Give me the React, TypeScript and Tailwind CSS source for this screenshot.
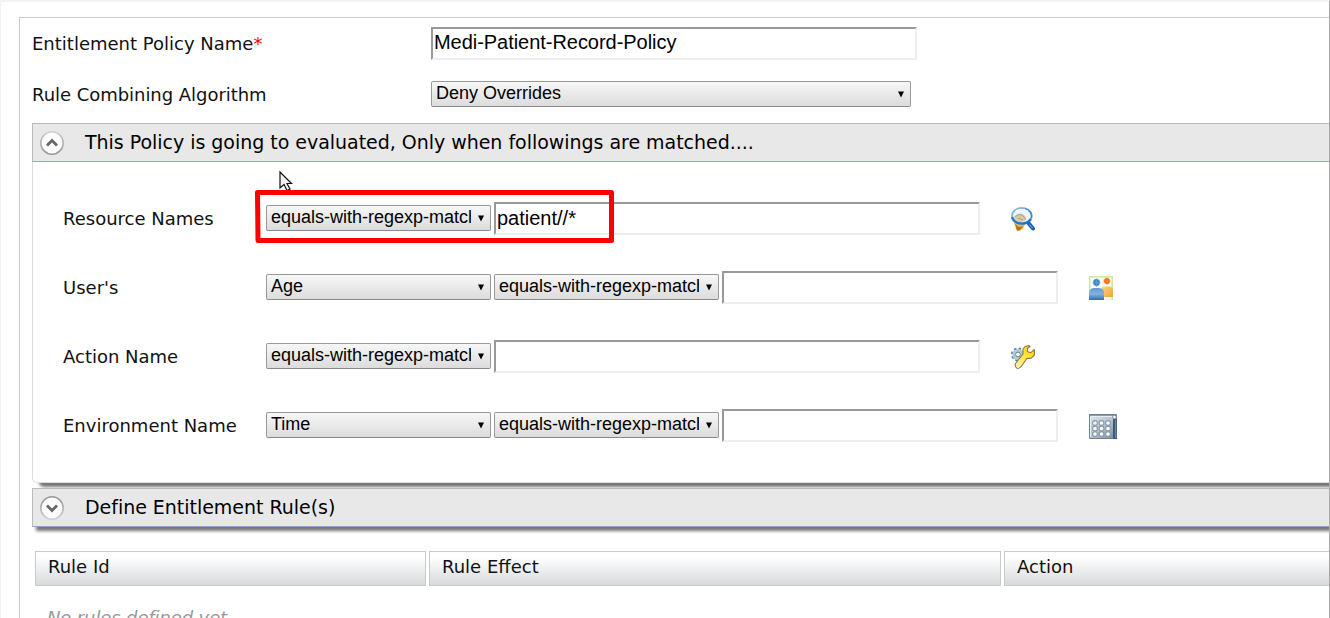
import React from "react";

const MATCH = "equals-with-regexp-match";

function Select({ value, className }: { value: string; className: string }) {
  return (
    <div
      className={`relative mb-[2px] flex h-[26px] shrink-0 rounded-[2px] border border-[#999] border-b-[#8a8a8a] bg-linear-to-b from-[#f7f7f7] to-[#dcdcdc] pr-[19px] pl-1 ${className}`}
    >
      <div className="h-6 min-w-0 flex-1 overflow-hidden font-['Liberation_Sans',sans-serif] text-[18px] leading-[22px] whitespace-nowrap text-black">
        {value}
      </div>
      <svg className="absolute top-[9px] right-[6px] h-[7px] w-[6px]" viewBox="0 0 6 7">
        <path d="M0 0.5H6L3 6.5Z" fill="#000" />
      </svg>
    </div>
  );
}

function TextInput({ value = "", className }: { value?: string; className: string }) {
  return (
    <input
      type="text"
      defaultValue={value}
      className={`h-[33px] shrink-0 border-2 border-[#eee] border-t-[#999] border-l-[#999] bg-white px-px font-['Liberation_Sans',sans-serif] text-[20px] text-black outline-none ${className}`}
    />
  );
}

function SectionHeader({ title, open }: { title: string; open: boolean }) {
  return (
    <div
      className={`relative flex h-[39px] items-center border border-r-0 border-[#bbb] border-b-[#94a6c6] bg-[#e8e8e8] pl-[6px] ${
        open ? "" : "shadow-[4px_4px_3px_#777]"
      }`}
    >
      <svg className="h-[26px] w-[26px]" viewBox="0 0 26 26" fill="none">
        <defs>
          <linearGradient id={open ? "ringUp" : "ringDown"} x1="0" y1={open ? "0" : "1"} x2="0" y2={open ? "1" : "0"}>
            <stop offset="0" stopColor="#cfcfcf" />
            <stop offset="1" stopColor="#999" />
          </linearGradient>
        </defs>
        <circle cx="13" cy="13" r="11.2" fill="#fcfcfc" stroke={open ? "url(#ringUp)" : "url(#ringDown)"} strokeWidth="1.6" />
        <path d={open ? "M8 15.5L13 10.5L18 15.5" : "M8 10.5L13 15.5L18 10.5"} stroke="#666" strokeWidth="2.8" />
      </svg>
      <span className="mb-[2px] ml-[20px] text-[19px] leading-6 tracking-[-0.03px] whitespace-nowrap text-black">{title}</span>
    </div>
  );
}

function SearchIcon() {
  return (
    <svg className="h-6 w-6" viewBox="0 0 24 24" fill="none">
      <path d="M3 16L8 13L14 17L12 22L6 24Z" fill="#e9b75a" />
      <path d="M4 17L8 20L12 19L9 23.5H6Z" fill="#ad7428" />
      <path d="M16.5 15L22 21.5" stroke="#1761b5" strokeWidth="4" strokeLinecap="round" />
      <path d="M18.5 17.5L21.5 21" stroke="#75b2ec" strokeWidth="1" />
      <ellipse cx="10.8" cy="8.8" rx="9.8" ry="7.8" fill="#edf5fa" stroke="#8bb9dc" strokeWidth="1.8" />
      <path d="M3 12C3 8 7 6 12 7L15 10L14 14Q8 17 3 12Z" fill="#dccbaa" />
      <path d="M4 10Q9 5 13 10L15 13M7 11L12 13" stroke="#ae9c7c" />
      <path d="M1 10C2 14 6 16.6 11 16.6Q17 16.4 20 12" stroke="#2474c2" strokeWidth="2.4" />
      <path d="M20.5 11Q21.8 4 14 1.6" stroke="#3988cc" strokeWidth="1.4" />
      <path d="M5 4Q11 1 17 4" stroke="#fff" strokeWidth="1.2" />
    </svg>
  );
}

function UsersIcon() {
  return (
    <svg className="h-6 w-6" viewBox="0 0 24 24">
      <defs>
        <linearGradient id="userBlue" x1="0" y1="0" x2="0" y2="1">
          <stop offset="0" stopColor="#5f9bd2" /><stop offset="0.5" stopColor="#85b1de" /><stop offset="1" stopColor="#286fb4" />
        </linearGradient>
        <linearGradient id="userGold" x1="0" y1="0" x2="1" y2="1">
          <stop offset="0" stopColor="#ffd486" /><stop offset="1" stopColor="#e9a22c" />
        </linearGradient>
      </defs>
      <rect width="24" height="24" fill="#cfe7a5" />
      <rect x="1.5" y="1.5" width="21" height="22" fill="#fafdf4" />
      <path d="M14 1V11M13 21H24" stroke="#e6f2cd" />
      <path d="M12 24V15Q12 10.5 16 10.5H21Q24 11 24 14V21H14Z" fill="url(#userGold)" />
      <path d="M0 24V17Q0 12 6 12H9Q15 12 15 17V24Z" fill="url(#userBlue)" />
      <circle cx="7.5" cy="6.5" r="3.4" fill="#3b88ca" />
      <path d="M7.5 2.5V10.5M3.5 6.5H11.5" stroke="#5a9bd3" />
      <circle cx="18" cy="5" r="3" fill="#f26a09" />
      <path d="M18 1.5V8.8M14.5 5H21.5" stroke="#f58b36" />
    </svg>
  );
}

function ToolsIcon() {
  return (
    <svg className="h-6 w-6" viewBox="0 0 24 24" fill="none">
      <defs>
        <linearGradient id="wrench" x1="19" y1="2" x2="6" y2="23" gradientUnits="userSpaceOnUse">
          <stop offset="0" stopColor="#f5d500" /><stop offset="0.4" stopColor="#ffe53d" /><stop offset="1" stopColor="#fff0bb" />
        </linearGradient>
      </defs>
      <circle cx="7" cy="9.5" r="5.8" stroke="#637985" strokeWidth="2.4" strokeDasharray="2.3 2.25" />
      <circle cx="7" cy="9.5" r="4.2" stroke="#a9cbdc" strokeWidth="3" />
      <circle cx="7" cy="9.5" r="2.4" fill="#fff" stroke="#637985" />
      <path
        d="M18 0.6L14 1.5L12 4V9L4.5 18.5Q3.5 22 6 23.3Q8.5 24 10.5 21L16 13.4L20 13.4L23.4 10V4.5L19.5 7.8L16.5 6.5V3.5L19 1.5Z"
        fill="url(#wrench)" stroke="#8f7a50" strokeWidth="1.1" strokeLinejoin="round"
      />
    </svg>
  );
}

function CalendarIcon() {
  return (
    <svg className="mt-[2px] h-[25px] w-7" viewBox="0 0 28 25" fill="none">
      <defs>
        <linearGradient id="calFace" x1="0" y1="0" x2="1" y2="1">
          <stop offset="0" stopColor="#dfe7ee" /><stop offset="0.5" stopColor="#b5c5d1" /><stop offset="1" stopColor="#71879a" />
        </linearGradient>
      </defs>
      <path d="M0.5 0.5H27.5V24.5H0.5Z" fill="url(#calFace)" stroke="#708395" />
      <path d="M0 1H27" stroke="#708395" strokeWidth="1.4" />
      <path d="M1.5 3V23M2 2.5H24" stroke="#e5edf2" />
      <path d="M24 5H28V25H24Z" fill="#3d597a" />
      <path d="M26.7 6V24" stroke="#8ba4bb" strokeWidth="0.8" />
      <circle cx="25.5" cy="3" r="1.8" fill="#fff" stroke="#7c8b95" />
      <g fill="#f8fafb" stroke="#8b98a2" strokeWidth="1.1">
        <circle cx="6" cy="9" r="2.4" /><circle cx="12.5" cy="9" r="2.4" /><circle cx="19" cy="9" r="2.4" />
        <circle cx="6" cy="14.5" r="2.4" /><circle cx="12.5" cy="14.5" r="2.4" /><circle cx="19" cy="14.5" r="2.4" />
        <circle cx="6" cy="20" r="2.4" /><circle cx="12.5" cy="20" r="2.4" /><circle cx="19" cy="20" r="2.4" />
      </g>
    </svg>
  );
}

function MatchRow({ label, attribute, value, icon }: { label: string; attribute?: string; value?: string; icon: React.ReactNode }) {
  return (
    <div className="flex h-[69px] items-center pl-[30px]">
      <span className="w-[203px] shrink-0 text-[18px] leading-6">{label}</span>
      <div className="flex items-center gap-[3px]">
        {attribute && <Select value={attribute} className="w-[225px]" />}
        <Select value={MATCH} className="w-[225px]" />
        <TextInput value={value} className={attribute ? "w-[336px] pb-px" : "w-[486px] pb-px"} />
      </div>
      <span className="ml-[31px]">{icon}</span>
    </div>
  );
}

export default function App() {
  return (
    <div className="relative h-[618px] w-[1330px] overflow-hidden border-t-2 border-r border-l border-t-[#f3f3f3] border-r-[#aaa] border-l-[#f3f3f3] bg-white font-['DejaVu_Sans',sans-serif] text-[18px] text-[#111]">
      <div className="mt-[15px] ml-[18px] h-[700px] border-t border-l border-[#ccc] pl-3">
        <div className="flex h-[51px] items-center">
          <label className="w-[399px]">Entitlement Policy Name<span className="text-[#f00]">*</span></label>
          <TextInput value="Medi-Patient-Record-Policy" className="w-[486px] pb-[3px] tracking-[-0.04px]" />
        </div>
        <div className="flex h-[51px] items-center">
          <label className="w-[399px] tracking-[-0.04px]">Rule Combining Algorithm</label>
          <Select value="Deny Overrides" className="w-[480px]" />
        </div>
        <div className="mt-[3px]">
          <SectionHeader open title="This Policy is going to evaluated, Only when followings are matched...." />
          <div className="h-[321px] rounded-bl-[5px] border-b border-l border-[#ddd] bg-white pt-[22px] shadow-[7px_4px_3px_#777]">
            <MatchRow label="Resource Names" value="patient//*" icon={<SearchIcon />} />
            <MatchRow label="User's" attribute="Age" icon={<UsersIcon />} />
            <MatchRow label="Action Name" icon={<ToolsIcon />} />
            <MatchRow label="Environment Name" attribute="Time" icon={<CalendarIcon />} />
          </div>
        </div>
        <div className="mt-[5px]">
          <SectionHeader open={false} title="Define Entitlement Rule(s)" />
        </div>
        <div className="mt-6 ml-[3px] flex gap-[3px]">
          <div className="h-[35px] w-[391px] shrink-0 border border-[#c8cacb] bg-linear-to-b from-white from-15% to-[#d8dadc] pl-3 leading-[30px]">Rule Id</div>
          <div className="h-[35px] w-[572px] shrink-0 border border-[#c8cacb] bg-linear-to-b from-white from-15% to-[#d8dadc] pl-3 leading-[30px]">Rule Effect</div>
          <div className="h-[35px] flex-1 border border-r-0 border-[#c8cacb] bg-linear-to-b from-white from-15% to-[#d8dadc] pl-3 leading-[30px]">Action</div>
        </div>
        <p className="mt-[18px] ml-[15px] tracking-[-0.12px] text-[#999] italic">No rules defined yet</p>
      </div>

      <svg className="absolute top-[168px] left-[277px] h-6 w-4" viewBox="0 0 16 24">
        <path d="M2 2V18L6 14.5L9 20.5L12 19L9 13.5H13.5Z" fill="#f5f5f5" stroke="#111" strokeWidth="1.2" />
      </svg>
      <svg className="absolute top-[186px] left-[252px] h-[58px] w-[364px]" viewBox="0 0 364 58" fill="none">
        <path d="M4.5 4.5L358.5 4.5V52.5H5L4.5 4.5" stroke="#f00" strokeWidth="5" strokeLinecap="round" strokeLinejoin="round" />
      </svg>
    </div>
  );
}
